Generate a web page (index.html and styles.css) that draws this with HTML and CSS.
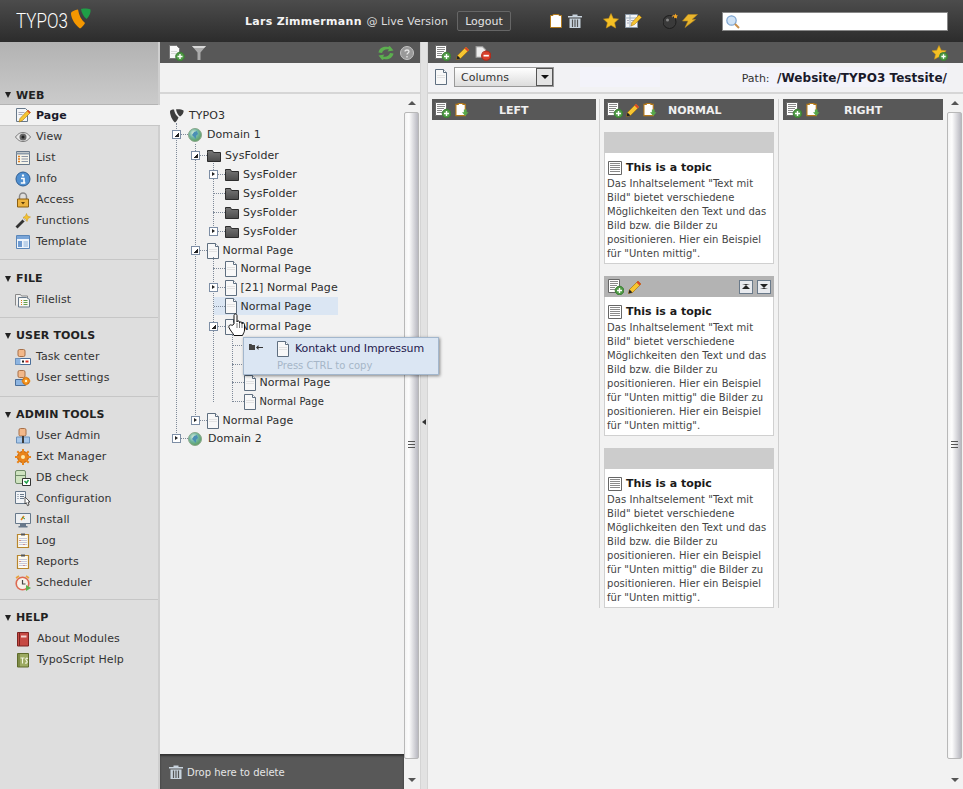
FILE: index.html
```html
<!DOCTYPE html>
<html lang="en">
<head>
    <meta charset="UTF-8">
    <meta name="viewport" content="width=device-width, initial-scale=1.0">
    <title>TYPO3 Backend</title>
    <link rel="stylesheet" href="styles.css">
</head>
<body>
    <!-- icon sprite -->
    <svg class="sprite" xmlns="http://www.w3.org/2000/svg">
        <defs>
            <linearGradient id="g-folder" x1="0" y1="0" x2="0" y2="1"><stop offset="0" stop-color="#777"/><stop offset="1" stop-color="#4c4c4c"/></linearGradient>
            <radialGradient id="g-globe" cx=".4" cy=".35" r=".7"><stop offset="0" stop-color="#dff0e0"/><stop offset=".5" stop-color="#6fb6a0"/><stop offset="1" stop-color="#5d9a58"/></radialGradient>
        </defs>
        <symbol id="i-page" viewBox="0 0 12 16"><path d="M.5.5h8l3 3v12H.5z" fill="#f8f8f8" stroke="#5f6f80"/><path d="M8.5.5v3h3" fill="#fff" stroke="#5f6f80"/><path d="M2.5 6.5h7M2.5 8.5h7" stroke="#ccc" stroke-dasharray="1 1"/></symbol>
        <symbol id="i-folder" viewBox="0 0 14 14"><path d="M.5 3.5v-2h5l1 2h7v9H.5z" fill="url(#g-folder)" stroke="#2c2c2c"/></symbol>
        <symbol id="i-globe" viewBox="0 0 14 14"><circle cx="7" cy="7" r="6.5" fill="url(#g-globe)" stroke="#8aa88a"/><path d="M6 4l3-1 1 3-2 2v3L6 9 4 7z" fill="#4a8fb5"/></symbol>
        <symbol id="i-t3" viewBox="0 0 14 14"><path d="M0 2.5C0 1 2 .5 4 .5c.5 3 2 6 4.5 8C7.500 11 6 13 5 13.500 2 11 0 6 0 2.500zM6 .5C8 0 12 .5 13.500 1.500c.5 1.500-1 5-3.500 6C8 6 6.500 3 6 .5z" fill="#3e3e3e"/></symbol>
        <symbol id="i-logo" viewBox="0 0 20 21"><path d="M0 5.500C0 3.500 4 2 7 1.500c1 6 3.500 10.500 7 13.500-1 2-3.500 5-5 5.500C4 17 0 10 0 5.500z" fill="#f49700"/><path d="M10 1C12 0 18 .5 19.500 1.500c.5 2.500-1 7-4 9.500C12.500 8.500 10.500 4.500 10 1z" fill="#1f9f47"/></symbol>
        <symbol id="i-new" viewBox="0 0 16 16"><path d="M.5.5h11v13H.5z" fill="#fff" stroke="#666"/><path d="M2 2.500h8M2 4.500h8M2 6.500h7M2 8.500h5M2 10.500h5" stroke="#8a8a8a"/><circle cx="11.500" cy="11.500" r="4.300" fill="#4f9a45" stroke="#3b7d34"/><path d="M11.500 9v5M9 11.500h5" stroke="#fff" stroke-width="1.400"/></symbol>
        <symbol id="i-newpage" viewBox="0 0 16 16"><path d="M.5.5h7l3 3v10H.5z" fill="#f8f8f8" stroke="#777"/><path d="M2.500 6.500h6M2.500 8.500h6" stroke="#bbb" stroke-dasharray="1 1"/><circle cx="11" cy="11.500" r="4.300" fill="#4f9a45" stroke="#3b7d34"/><path d="M11 9v5M8.500 11.500h5" stroke="#fff" stroke-width="1.400"/></symbol>
        <symbol id="i-filter" viewBox="0 0 14 14"><path d="M0 0h14L8.500 6.500V14h-3V6.500z" fill="#aaa"/><path d="M0 0h14l-2 2H2z" fill="#d8d8d8"/></symbol>
        <symbol id="i-refresh" viewBox="0 0 16 14"><path d="M.5 6.500C1.500 1.500 6 .2 10 1L11.800 0 15.500 4.500 9.500 5.500l1.500-2C8 2.800 5 3.800 4 7z" fill="#5cae4f"/><path d="M15.500 7.500c-1 5-5.500 6.300-9.500 5.500L4.200 14 .5 9.500 6.500 8.500 5 10.500c3 .7 6-.3 7-3.500z" fill="#5cae4f"/></symbol>
        <symbol id="i-help" viewBox="0 0 14 14"><circle cx="7" cy="7" r="6.500" fill="#999" stroke="#c4c4c4"/><path d="M5 5.500C5 3.500 9 3.500 9 5.500 9 7 7 7 7 8.500M7 10v1.500" fill="none" stroke="#e8e8e8" stroke-width="1.300"/></symbol>
        <symbol id="i-pencil" viewBox="0 0 14 14"><path d="M10 1l3 3-8.500 8.500-4 1 1-4z" fill="#f7c531" stroke="#a87512" stroke-width=".7"/><path d="M10 1l3 3-1.500 1.500-3-3z" fill="#d8452c"/><path d="M.5 13.500l1-4 3 3z" fill="#222"/></symbol>
        <symbol id="i-paste" viewBox="0 0 14 15"><path d="M.5 1.500H3v-1h5v1h2.500v12H.5z" fill="#fff" stroke="#b5791a" stroke-width="1.200"/><path d="M9 7h3v3h2l-3.500 4L7 10h2z" fill="#58a84a"/></symbol>
        <symbol id="i-clip" viewBox="0 0 12 14"><path d="M.5 1.500H3v-1h6v1h2.500v12H.5z" fill="#fff" stroke="#b07a1e"/></symbol>
        <symbol id="i-delpage" viewBox="0 0 15 14"><path d="M1 1h6l3 3v7H1z" fill="#eee" stroke="#999"/><circle cx="10.500" cy="9.500" r="4.300" fill="#d9402c" stroke="#b02a1a"/><path d="M8 9.500h5" stroke="#fff" stroke-width="1.600"/></symbol>
        <symbol id="i-star" viewBox="0 0 16 16"><path d="M8 .5l2.300 5 5.200.6-3.900 3.600 1.100 5.300L8 12.300 3.300 15l1.100-5.300L.5 6.100l5.200-.6z" fill="#f5c024" stroke="#c8921a" stroke-width=".6"/></symbol>
        <symbol id="i-staradd" viewBox="0 0 16 16"><path d="M7 .5l2.200 4.700 5 .6-3.700 3.400 1 5L7 11.700 2.500 14.200l1-5L-.2 5.800l5-.6z" fill="#f5c024" stroke="#c8921a" stroke-width=".6"/><circle cx="11.500" cy="11.500" r="4" fill="#4f9a45" stroke="#3b7d34"/><path d="M11.500 9.300v4.400M9.300 11.500h4.400" stroke="#fff" stroke-width="1.300"/></symbol>
        <symbol id="i-trash" viewBox="0 0 14 14"><path d="M0 2h14v1.500H0zM4.500.5h5V2h-5z" fill="#c9d4de"/><path d="M1.500 4.500h11V14h-11z" fill="#c9d4de"/><path d="M4.500 5.500V13M7 5.500V13M9.500 5.500V13" stroke="#555" stroke-width="1.200"/></symbol>
        <symbol id="i-edit" viewBox="0 0 17 16"><path d="M.5 1.500h12v13H.5z" fill="#f4f6f8" stroke="#8b99a8"/><path d="M5 1.500v13M.5 5h12" stroke="#9fb0c0"/><path d="M2 7.500h2M2 10h2M6 7.500h4M6 10h3" stroke="#aab"/><path d="M14 2l2.500 2.500-7 7L6 13l1-3.500z" fill="#f7c531" stroke="#a87512" stroke-width=".6"/></symbol>
        <symbol id="i-bomb" viewBox="0 0 16 16"><circle cx="6.500" cy="9" r="6.500" fill="#3a3a3a" stroke="#1e1e1e"/><circle cx="4.500" cy="7" r="1.500" fill="#888"/><path d="M9 4l2-2" stroke="#a87b3a" stroke-width="1.500"/><path d="M12.500.5l.8 1.700 1.700.3-1.200 1.300.3 1.700-1.600-.8-1.500.8.2-1.700-1.200-1.300 1.700-.3z" fill="#f5a623"/></symbol>
        <symbol id="i-bolt" viewBox="0 0 16 14"><path d="M6 .5h9.500L10 5.500h3.500L3 13.500 6 7H.5z" fill="#e9b52c" stroke="#b98a1c" stroke-width=".6"/></symbol>
        <symbol id="i-search" viewBox="0 0 14 14"><circle cx="5.500" cy="5.500" r="4.700" fill="#cfe2f5" stroke="#7ea5d0" stroke-width="1.200"/><path d="M9 9l4 4" stroke="#c98f4a" stroke-width="2"/></symbol>
        <symbol id="i-mod-page" viewBox="0 0 16 16"><path d="M1.500 1.500h9l2 2v11h-11z" fill="#f4f6f8" stroke="#67788a"/><path d="M3.500 5.500h6M3.500 7.500h4" stroke="#aab"/><path d="M13 3l2.500 2.500-8 8L4 15l1-3.500z" fill="#f7c531" stroke="#a87512" stroke-width=".6"/><path d="M13 3l2.500 2.500-1 1L12 4z" fill="#d8452c"/></symbol>
        <symbol id="i-eye" viewBox="0 0 16 16"><path d="M.5 8C3 4.500 5.500 3.500 8 3.500s5 1 7.500 4.500C13 11.500 10.500 12.500 8 12.500S3 11.500.5 8z" fill="#e8e8e8" stroke="#777"/><circle cx="8" cy="8" r="3.500" fill="#666"/><circle cx="8" cy="8" r="1.500" fill="#222"/></symbol>
        <symbol id="i-list" viewBox="0 0 16 16"><path d="M1.500 1.500h13v13h-13z" fill="#f6f4ea" stroke="#67788a"/><path d="M1.500 3.500h13" stroke="#8a9aaa" stroke-width="2"/><path d="M3 6.500h2M3 9h2M3 11.500h2" stroke="#e07b1a" stroke-width="1.500"/><path d="M6.500 6.500H13M6.500 9H13M6.500 11.500H13" stroke="#8a96a8"/></symbol>
        <symbol id="i-info" viewBox="0 0 16 16"><circle cx="8" cy="8" r="7" fill="#4f8fd0" stroke="#2f5f95"/><path d="M8 3.500v2" stroke="#fff" stroke-width="2.200"/><path d="M6 7.500h3v4h1.300M5.800 12h4.500" fill="none" stroke="#fff" stroke-width="1.600"/></symbol>
        <symbol id="i-lock" viewBox="0 0 16 16"><path d="M4.500 7V4.500a3.500 3.500 0 0 1 7 0V7" fill="none" stroke="#888" stroke-width="1.500"/><path d="M2.500 7h11v8h-11z" fill="#eeb43f" stroke="#8a5f12"/><path d="M6 10h4l-2 2.500z" fill="#5a3c0a"/></symbol>
        <symbol id="i-wand" viewBox="0 0 16 16"><path d="M.5 13.500l8-8 2 2-8 8z" fill="#333"/><path d="M8.500 5.500l2 2-1 1-2-2z" fill="#ddd"/><path d="M11.500.5l1 2.500 3 1-2.500 1.500-1 3-1.300-2.800L8 4.500 10.500 3z" fill="#f2c230" stroke="#c8921a" stroke-width=".5"/></symbol>
        <symbol id="i-template" viewBox="0 0 16 16"><path d="M1.500 1.500h13v13h-13z" fill="#eef4fb" stroke="#5a86b8"/><path d="M2 2h12v3H2z" fill="#7aa5d8"/><path d="M3 7h4v6H3z" fill="#6e9ad0"/><path d="M8.500 7H13v6H8.500z" fill="#bcd2ea"/></symbol>
        <symbol id="i-filelist" viewBox="0 0 16 16"><path d="M.5 13.500v-11h5L6.500 4h6v2" fill="#eee" stroke="#888"/><path d="M3.500 5.500h8l3 2V15h-11z" fill="#f8f8f4" stroke="#67788a"/><path d="M6 8.500h1M6 10.500h1M6 12.500h1" stroke="#d97a20"/><path d="M8.500 8.500h4M8.500 10.500h4M8.500 12.500h4" stroke="#67a050"/></symbol>
        <symbol id="i-task" viewBox="0 0 16 16"><rect x="3" y=".5" width="7" height="7" rx="1.500" fill="#f2b88a" stroke="#a87048"/><path d="M.5 9.500h15v6H.5z" fill="#fff" stroke="#4a6e9a"/><path d="M.5 9.500h5v6h-5z" fill="#8db4e0"/><path d="M7 11.500h2v2H7z" fill="#222"/><path d="M10.500 11.500h3v2h-3z" fill="#d93025"/></symbol>
        <symbol id="i-usercfg" viewBox="0 0 16 16"><rect x="3" y=".5" width="7" height="7" rx="1.500" fill="#f2b88a" stroke="#a87048"/><path d="M.5 9.500h10v6H.5z" fill="#8db4e0" stroke="#4a6e9a"/><circle cx="11" cy="11" r="3.500" fill="#f5941e" stroke="#c96a0a"/><path d="M11 6.500v9M6.500 11h9" stroke="#f5941e"/><circle cx="11" cy="11" r="1.200" fill="#fff3d0"/></symbol>
        <symbol id="i-user" viewBox="0 0 16 16"><rect x="4" y=".5" width="7" height="7.500" rx="1.500" fill="#f2b88a" stroke="#a87048"/><path d="M1.500 9h13v6h-13z" fill="#a8c8ea" stroke="#6a90ba"/><path d="M7 8h2v7H7z" fill="#3c3c3c"/></symbol>
        <symbol id="i-gear" viewBox="0 0 16 16"><circle cx="8" cy="8" r="5.500" fill="#e9841a" stroke="#b85e08"/><path d="M8 0v16M0 8h16M2.300 2.300l11.400 11.400M13.700 2.300L2.300 13.700" stroke="#e9841a" stroke-width="2"/><circle cx="8" cy="8" r="2" fill="#ffe9a8"/></symbol>
        <symbol id="i-db" viewBox="0 0 16 16"><rect x=".5" y=".5" width="10" height="13" rx="1.500" fill="#cfe3c0" stroke="#6f8a68"/><path d="M.5 5.500h10" stroke="#6f8a68"/><path d="M7.500 8.500h8v7h-8z" fill="#fff" stroke="#333"/><path d="M9.500 11l2 2 2-3" fill="none" stroke="#1f9f47" stroke-width="1.500"/></symbol>
        <symbol id="i-config" viewBox="0 0 16 16"><path d="M.5.500h10v12H.5z" fill="#f2f4f7" stroke="#67788a"/><path d="M2.500 3.500h1M2.500 5.500h1M2.500 7.500h1M5 3.500h4M5 5.500h4M5 7.500h4" stroke="#67788a"/><path d="M10 6l5 5h-2l1 3-1.500.7-1.200-3L10 13z" fill="#fff" stroke="#333" stroke-width=".8"/></symbol>
        <symbol id="i-install" viewBox="0 0 16 16"><path d="M.5 1.500h15v10H.5z" fill="#eef0f2" stroke="#67788a"/><path d="M5 12h6v2H5zM3.500 14h9v1.500h-9z" fill="#67788a"/><path d="M6 8l3-4" stroke="#e9841a" stroke-width="1.500"/><path d="M7 5l3 2" stroke="#3c9a48"/></symbol>
        <symbol id="i-log" viewBox="0 0 16 16"><path d="M2.500 1.500h11v13h-11z" fill="#fdfaf0" stroke="#b8862d" stroke-width="1.200"/><path d="M6 .5h4v2H6z" fill="#555"/><path d="M4.500 5.500h7M4.500 7.500h7M4.500 9.500h7M4.500 11.500h7" stroke="#8a96c8" stroke-dasharray="1 1"/><path d="M4.500 7.500h2M8.500 11.500h2" stroke="#d9503a" stroke-dasharray="1 1"/></symbol>
        <symbol id="i-clock" viewBox="0 0 16 16"><circle cx="7.500" cy="8.500" r="6.300" fill="#f6f2ea" stroke="#dd6a52" stroke-width="1.600"/><path d="M7.500 5v4h3" fill="none" stroke="#444" stroke-width="1.200"/><path d="M1 3l3-2M14 3l-3-2" stroke="#e9a23a" stroke-width="1.600"/><path d="M11 10l5 3-5 3z" fill="#5fb04c"/></symbol>
        <symbol id="i-book" viewBox="0 0 16 16"><path d="M2.500 1.500h11V15h-11z" fill="#c64a44" stroke="#7d2320"/><path d="M4.500 1.500V15" stroke="#7d2320"/><path d="M6 4.500h5.500v2H6z" fill="#f4d4d0"/></symbol>
        <symbol id="i-ts" viewBox="0 0 16 16"><path d="M2.500 1.500h11V15h-11z" fill="#9dab62" stroke="#5e6b2a"/><path d="M4 1.500V15" stroke="#5e6b2a"/><path d="M5.500 6h4M7.500 6v5.500M13 6.500c-2-1-3 .5-1.500 2s.5 3-1.500 2.500" fill="none" stroke="#f4f6e0" stroke-width="1.100"/></symbol>
        <symbol id="i-lines" viewBox="0 0 14 14"><path d="M.5.500h13v13H.5z" fill="#fff" stroke="#666"/><path d="M2 2.500h10M2 4.500h10M2 6.500h10M2 8.500h10M2 10.500h10" stroke="#8a8a8a"/></symbol>
        <symbol id="i-dropin" viewBox="0 0 14 8"><path d="M0 2.500V1h2.500L3 2h3v5H0z" fill="#444"/><path d="M14 4H9.500V2L7 4.500 9.500 7V5H14z" fill="#333"/></symbol>
    </svg>

    <header class="topbar">
        <div class="brand">
            <span class="brand-name">TYPO3</span>
            <svg class="logo-mark"><use href="#i-logo"/></svg>
        </div>
        <div class="user-info"><strong>Lars Zimmermann</strong> @ Live Version</div>
        <button class="logout">Logout</button>
        <div class="top-icons top-icons-a">
            <svg class="ico-clip"><use href="#i-clip"/></svg>
            <svg class="ico-14"><use href="#i-trash"/></svg>
        </div>
        <div class="top-icons top-icons-b">
            <svg class="ico-16"><use href="#i-star"/></svg>
            <svg class="ico-17"><use href="#i-edit"/></svg>
        </div>
        <div class="top-icons top-icons-c">
            <svg class="ico-16"><use href="#i-bomb"/></svg>
            <svg class="ico-16"><use href="#i-bolt"/></svg>
        </div>
        <div class="search-box"><svg class="ico-14"><use href="#i-search"/></svg></div>
    </header>

    <div class="main">
        <nav class="modules">
            <section class="mod-group mod-group-first">
                <h3 class="mod-head mod-head-first"><i class="caret"></i>WEB</h3>
                <ul>
                    <li class="mod-item active"><svg class="ico-16"><use href="#i-mod-page"/></svg>Page</li>
                    <li class="mod-item"><svg class="ico-16"><use href="#i-eye"/></svg>View</li>
                    <li class="mod-item"><svg class="ico-16"><use href="#i-list"/></svg>List</li>
                    <li class="mod-item"><svg class="ico-16"><use href="#i-info"/></svg>Info</li>
                    <li class="mod-item"><svg class="ico-16"><use href="#i-lock"/></svg>Access</li>
                    <li class="mod-item"><svg class="ico-16"><use href="#i-wand"/></svg>Functions</li>
                    <li class="mod-item"><svg class="ico-16"><use href="#i-template"/></svg>Template</li>
                </ul>
            </section>
            <section class="mod-group mod-group-file">
                <h3 class="mod-head"><i class="caret"></i>FILE</h3>
                <ul>
                    <li class="mod-item"><svg class="ico-16"><use href="#i-filelist"/></svg>Filelist</li>
                </ul>
            </section>
            <section class="mod-group">
                <h3 class="mod-head"><i class="caret"></i>USER TOOLS</h3>
                <ul>
                    <li class="mod-item"><svg class="ico-16"><use href="#i-task"/></svg>Task center</li>
                    <li class="mod-item"><svg class="ico-16"><use href="#i-usercfg"/></svg>User settings</li>
                </ul>
            </section>
            <section class="mod-group mod-group-admin">
                <h3 class="mod-head"><i class="caret"></i>ADMIN TOOLS</h3>
                <ul>
                    <li class="mod-item"><svg class="ico-16"><use href="#i-user"/></svg>User Admin</li>
                    <li class="mod-item"><svg class="ico-16"><use href="#i-gear"/></svg>Ext Manager</li>
                    <li class="mod-item"><svg class="ico-16"><use href="#i-db"/></svg>DB check</li>
                    <li class="mod-item"><svg class="ico-16"><use href="#i-config"/></svg>Configuration</li>
                    <li class="mod-item"><svg class="ico-16"><use href="#i-install"/></svg>Install</li>
                    <li class="mod-item"><svg class="ico-16"><use href="#i-log"/></svg>Log</li>
                    <li class="mod-item"><svg class="ico-16"><use href="#i-log"/></svg>Reports</li>
                    <li class="mod-item"><svg class="ico-16"><use href="#i-clock"/></svg>Scheduler</li>
                </ul>
            </section>
            <section class="mod-group mod-group-last">
                <h3 class="mod-head"><i class="caret"></i>HELP</h3>
                <ul>
                    <li class="mod-item mod-item-help"><svg class="ico-16"><use href="#i-book"/></svg>About Modules</li>
                    <li class="mod-item mod-item-help"><svg class="ico-16"><use href="#i-ts"/></svg>TypoScript Help</li>
                </ul>
            </section>
        </nav>

        <div class="tree-panel">
            <div class="toolbar tree-toolbar">
                <svg class="ico-16"><use href="#i-newpage"/></svg>
                <svg class="ico-14"><use href="#i-filter"/></svg>
                <span class="spacer"></span>
                <svg class="ico-16"><use href="#i-refresh"/></svg>
                <svg class="ico-14"><use href="#i-help"/></svg>
            </div>
            <div class="filter-bar"></div>
            <div class="tree-body">
                <div class="tree-col">
                    <div class="tree">
                        <div class="row row-root"><svg class="ico-14"><use href="#i-t3"/></svg><span class="label label-root">TYPO3</span></div>
                        <ul class="branch branch-1">
                            <li>
                                <div class="row l1"><i class="exp open"></i><svg class="ico-14"><use href="#i-globe"/></svg><span class="label label-5">Domain 1</span></div>
                                <ul class="branch branch-2">
                                    <li class="gap-2">
                                        <div class="row l2"><i class="exp open"></i><svg class="ico-14"><use href="#i-folder"/></svg><span class="label">SysFolder</span></div>
                                        <ul class="branch branch-3">
                                            <li><div class="row l3"><i class="exp"></i><svg class="ico-14"><use href="#i-folder"/></svg><span class="label">SysFolder</span></div></li>
                                            <li><div class="row l3"><i class="conn"></i><svg class="ico-14"><use href="#i-folder"/></svg><span class="label">SysFolder</span></div></li>
                                            <li><div class="row l3"><i class="conn"></i><svg class="ico-14"><use href="#i-folder"/></svg><span class="label">SysFolder</span></div></li>
                                            <li><div class="row l3"><i class="exp"></i><svg class="ico-14"><use href="#i-folder"/></svg><span class="label">SysFolder</span></div></li>
                                        </ul>
                                    </li>
                                    <li>
                                        <div class="row l2"><i class="exp open"></i><svg class="ico-page"><use href="#i-page"/></svg><span class="label">Normal Page</span></div>
                                        <ul class="branch branch-3">
                                            <li class="gap-n1"><div class="row l3"><i class="conn"></i><svg class="ico-page"><use href="#i-page"/></svg><span class="label">Normal Page</span></div></li>
                                            <li><div class="row l3"><i class="exp"></i><svg class="ico-page"><use href="#i-page"/></svg><span class="label">[21] Normal Page</span></div></li>
                                            <li><div class="row l3 selected"><i class="conn"></i><svg class="ico-page"><use href="#i-page"/></svg><span class="label">Normal Page</span></div></li>
                                            <li class="gap-2">
                                                <div class="row l3"><i class="exp open"></i><svg class="ico-page"><use href="#i-page"/></svg><span class="label">Normal Page</span></div>
                                                <ul class="branch branch-4">
                                                    <!-- the labels of these two rows lie under the drag tooltip -->
                                                    <li><div class="row l4"><i class="conn"></i><svg class="ico-page"><use href="#i-page"/></svg></div></li>
                                                    <li><div class="row l4"><i class="conn"></i><svg class="ico-page"><use href="#i-page"/></svg></div></li>
                                                    <li class="gap-n1"><div class="row l4"><i class="conn"></i><svg class="ico-page"><use href="#i-page"/></svg><span class="label">Normal Page</span></div></li>
                                                    <li><div class="row l4"><i class="conn"></i><svg class="ico-page"><use href="#i-page"/></svg><span class="label label-small">Normal Page</span></div></li>
                                                </ul>
                                            </li>
                                        </ul>
                                    </li>
                                    <li><div class="row l2"><i class="exp"></i><svg class="ico-page"><use href="#i-page"/></svg><span class="label">Normal Page</span></div></li>
                                </ul>
                            </li>
                            <li class="gap-n1"><div class="row l1"><i class="exp"></i><svg class="ico-14"><use href="#i-globe"/></svg><span class="label label-6">Domain 2</span></div></li>
                        </ul>

                        <div class="drag-tip">
                            <svg class="ico-drop"><use href="#i-dropin"/></svg>
                            <div class="drag-tip-text">
                                <div class="drag-tip-title"><svg class="ico-page"><use href="#i-page"/></svg>Kontakt und Impressum</div>
                                <div class="drag-tip-hint">Press CTRL to copy</div>
                            </div>
                        </div>
                        <svg class="hand" viewBox="0 0 18 24"><path d="M6 11V2.500C6 .5 9 .5 9 2.500V9c0-1.500 2.500-1.500 2.500 0v1c0-1.500 2.500-1.500 2.500 0v1c0-1.300 2.500-1.300 2.500.3V17c0 2-1 3-2 5.500H6C5 20 2.500 18 1 14.500.3 12.500 2.500 11 4 12.500z" fill="#fff" stroke="#111"/><path d="M9 10v5M11.500 10v5M14 11v4" stroke="#555" stroke-width=".8"/></svg>
                    </div>
                    <div class="drop-delete"><svg class="ico-14"><use href="#i-trash"/></svg>Drop here to delete</div>
                </div>
                <div class="scrollbar">
                    <div class="scroll-btn"><i class="arrow-up"></i></div>
                    <div class="scroll-thumb"><i class="grip"></i></div>
                    <div class="scroll-track"></div>
                    <div class="scroll-btn"><i class="arrow-down"></i></div>
                </div>
            </div>
        </div>

        <div class="splitter"><i class="splitter-arrow"></i></div>

        <div class="content">
            <div class="toolbar content-toolbar">
                <svg class="ico-16"><use href="#i-new"/></svg>
                <svg class="ico-14"><use href="#i-pencil"/></svg>
                <svg class="ico-16"><use href="#i-delpage"/></svg>
                <span class="spacer"></span>
                <svg class="ico-16"><use href="#i-staradd"/></svg>
            </div>
            <div class="doc-bar">
                <svg class="ico-page"><use href="#i-page"/></svg>
                <div class="select-box"><span class="select-value">Columns</span><span class="select-btn"><i class="arrow-select"></i></span></div>
                <span class="doc-patch"></span>
                <div class="path">Path: <strong>/Website/TYPO3 Testsite/</strong></div>
            </div>
            <div class="content-body">
                <div class="columns">
                    <div class="col col-left">
                        <div class="col-head">
                            <svg class="ico-16"><use href="#i-new"/></svg>
                            <svg class="ico-14"><use href="#i-paste"/></svg>
                            <span class="col-title">LEFT</span>
                        </div>
                    </div>
                    <div class="col col-normal">
                        <div class="col-head">
                            <svg class="ico-16"><use href="#i-new"/></svg>
                            <svg class="ico-14"><use href="#i-pencil"/></svg>
                            <svg class="ico-14"><use href="#i-paste"/></svg>
                            <span class="col-title">NORMAL</span>
                        </div>
                        <article class="card">
                            <div class="card-head"></div>
                            <div class="card-body">
                                <h4 class="card-title"><svg class="ico-14"><use href="#i-lines"/></svg>This is a topic</h4>
                                <p>Das Inhaltselement "Text mit Bild" bietet verschiedene Möglichkeiten den Text und das Bild bzw. die Bilder zu positionieren. Hier ein Beispiel für "Unten mittig".</p>
                            </div>
                        </article>
                        <article class="card">
                            <div class="card-head card-head-hover">
                                <svg class="ico-16"><use href="#i-new"/></svg>
                                <svg class="ico-14"><use href="#i-pencil"/></svg>
                                <span class="spacer"></span>
                                <span class="move-btn"><i class="move-up"></i></span>
                                <span class="move-btn"><i class="move-down"></i></span>
                            </div>
                            <div class="card-body">
                                <h4 class="card-title"><svg class="ico-14"><use href="#i-lines"/></svg>This is a topic</h4>
                                <p>Das Inhaltselement "Text mit Bild" bietet verschiedene Möglichkeiten den Text und das Bild bzw. die Bilder zu positionieren. Hier ein Beispiel für "Unten mittig" die Bilder zu positionieren. Hier ein Beispiel für "Unten mittig".</p>
                            </div>
                        </article>
                        <article class="card">
                            <div class="card-head"></div>
                            <div class="card-body">
                                <h4 class="card-title"><svg class="ico-14"><use href="#i-lines"/></svg>This is a topic</h4>
                                <p>Das Inhaltselement "Text mit Bild" bietet verschiedene Möglichkeiten den Text und das Bild bzw. die Bilder zu positionieren. Hier ein Beispiel für "Unten mittig" die Bilder zu positionieren. Hier ein Beispiel für "Unten mittig".</p>
                            </div>
                        </article>
                    </div>
                    <div class="col col-right">
                        <div class="col-head">
                            <svg class="ico-16"><use href="#i-new"/></svg>
                            <svg class="ico-14"><use href="#i-paste"/></svg>
                            <span class="col-title">RIGHT</span>
                        </div>
                    </div>
                </div>
                <div class="scrollbar">
                    <div class="scroll-btn"><i class="arrow-up"></i></div>
                    <div class="scroll-thumb"><i class="grip"></i></div>
                    <div class="scroll-track"></div>
                    <div class="scroll-btn"><i class="arrow-down"></i></div>
                </div>
            </div>
        </div>
    </div>
</body>
</html>
```

FILE: styles.css
```css
* {
    margin: 0;
    padding: 0;
    box-sizing: border-box;
}

html, body {
    height: 100%;
    overflow: hidden;
}

body {
    font-family: "DejaVu Sans", Verdana, sans-serif;
    font-size: 11px;
    color: #333;
    background-color: #f2f2f2;
    display: flex;
    flex-direction: column;
}

ul {
    list-style: none;
}

i {
    display: block;
    flex: none;
}

svg {
    display: block;
    flex: none;
}

.sprite {
    position: absolute;
    width: 0;
    height: 0;
}

.ico-16 { width: 16px; height: 16px; }
.ico-17 { width: 17px; height: 16px; }
.ico-14 { width: 14px; height: 14px; }
.ico-page { width: 12px; height: 16px; }
.ico-clip { width: 12px; height: 14px; }
.ico-drop { width: 14px; height: 8px; }

.spacer {
    flex: 1;
}

/* top bar */
.topbar {
    height: 42px;
    flex: none;
    display: flex;
    align-items: center;
    color: #e8e8e8;
    background: linear-gradient(#4c4c4c, #2c2c2c);
}

.brand {
    width: 245px;
    height: 42px;
    padding-left: 16px;
    display: flex;
    align-items: flex-start;
}

.brand-name {
    font-family: "Roboto", sans-serif;
    font-weight: 300;
    font-size: 21px;
    line-height: 42px;
    width: 55px;
    color: #fff;
    transform: scaleX(0.81);
    transform-origin: left center;
}

.logo-mark {
    width: 20px;
    height: 21px;
    margin-top: 8px;
}

.user-info {
    width: 212px;
    font-size: 11px;
    letter-spacing: 0.05px;
    white-space: nowrap;
    color: #ddd;
}

.user-info strong {
    letter-spacing: 0.3px;
    margin-right: 1px;
    color: #f4f4f4;
}

.logout {
    width: 54px;
    height: 20px;
    font: 11px "DejaVu Sans", Verdana, sans-serif;
    color: #e4e4e4;
    background-color: #3f3f3f;
    border: 1px solid #666;
    border-radius: 2px;
}

.top-icons {
    display: flex;
    align-items: center;
}

.top-icons-a { margin-left: 39px; gap: 6px; }
.top-icons-b { margin-left: 21px; gap: 6px; }
.top-icons-c { margin-left: 21px; gap: 3px; }

.search-box {
    width: 226px;
    height: 19px;
    margin-left: 24px;
    padding: 2px 3px;
    background-color: #fff;
    border: 1px solid #888;
}

.main {
    flex: 1;
    display: flex;
    min-height: 0;
}

/* module menu */
.modules {
    width: 160px;
    flex: none;
    background-color: #dedede;
    border-right: 2px solid #cfcfcf;
}

.mod-group {
    padding: 7px 0 8px;
    border-bottom: 1px solid #c6c6c6;
}

.mod-group-first {
    padding-top: 0;
    padding-bottom: 7px;
}

.mod-group-file {
    padding: 8px 0 7px;
}

.mod-group-admin {
    padding-bottom: 6px;
}

.mod-group-last {
    padding-top: 7px;
    border-bottom: 0;
}

.mod-head {
    height: 21px;
    padding-left: 5px;
    display: flex;
    align-items: center;
    gap: 5px;
    font-size: 11px;
    letter-spacing: 0.15px;
    color: #222;
}

.mod-head-first {
    height: 63px;
    padding-top: 44px;
    background: linear-gradient(#b2b2b2, #cbcbcb);
    border-bottom: 1px solid #b4b4b4;
}

.caret {
    width: 0;
    height: 0;
    border-left: 3.5px solid transparent;
    border-right: 3.5px solid transparent;
    border-top: 6px solid #222;
}

.mod-item {
    height: 21px;
    padding-left: 15px;
    display: flex;
    align-items: center;
    gap: 5px;
    letter-spacing: 0.08px;
    white-space: nowrap;
}

.mod-item.active {
    width: 160px;
    font-weight: bold;
    color: #1a1a2a;
    background-color: #f2f2f2;
    border-bottom: 1px solid #c6c6c6;
}

.mod-item-help {
    gap: 6px;
}

/* tree panel */
.tree-panel {
    width: 260px;
    flex: none;
    display: flex;
    flex-direction: column;
}

.toolbar {
    height: 21px;
    flex: none;
    display: flex;
    align-items: center;
    background-color: #585858;
}

.tree-toolbar {
    padding: 0 6px 0 9px;
    gap: 6px;
}

.tree-toolbar .ico-14:nth-of-type(2) {
    margin-left: 1px;
}

.filter-bar {
    height: 31px;
    flex: none;
    background-color: #f2f2f2;
    border-bottom: 2px solid #d6d6d6;
}

.tree-body {
    flex: 1;
    display: flex;
    min-height: 0;
}

.tree-col {
    flex: 1;
    display: flex;
    flex-direction: column;
    min-width: 0;
}

.tree {
    flex: 1;
    padding-top: 12px;
    position: relative;
}

.row {
    height: 19px;
    display: flex;
    align-items: center;
    white-space: nowrap;
    color: #2e2e2e;
}

.row-root { padding-left: 10px; }
.l1 { padding-left: 12px; }
.l2 { padding-left: 31px; }
.l3 { padding-left: 49px; }
.l4 { padding-left: 68px; }

.row.selected {
    width: 124px;
    height: 18px;
    margin-left: 54px;
    padding-left: 0;
    background-color: #dbe6f3;
}

.row.selected .conn {
    margin-left: 0;
    width: 11px;
}

.label {
    margin-left: 4px;
    letter-spacing: 0.08px;
}

.ico-page + .label {
    margin-left: 3.5px;
}

.label-root { margin-left: 5px; }
.label-5 { margin-left: 5px; }
.label-6 { margin-left: 6px; }
.label-small { font-size: 10px; }

.gap-2 { margin-top: 2px; }
.gap-n1 { margin-top: -1px; }

.branch {
    position: relative;
}

/* vertical dotted guide of a tree level, stops at the last sibling */
.branch::before {
    content: "";
    position: absolute;
    top: -2px;
    bottom: 9px;
    border-left: 1px dotted #7f8a99;
}

.branch-1::before { left: 16px; }
.branch-2::before { left: 35px; }
.branch-3::before { left: 53px; }
.branch-4::before { left: 72px; }

.exp {
    width: 9px;
    height: 9px;
    margin-right: 7px;
    background-color: #fff;
    border: 1px solid #7d8ea5;
    position: relative;
}

.exp::before {
    content: "";
    position: absolute;
    left: 2px;
    top: 1px;
    border-left: 3px solid #222;
    border-top: 2.5px solid transparent;
    border-bottom: 2.5px solid transparent;
}

.exp.open::before {
    left: 2px;
    top: 2px;
    width: 4px;
    height: 4px;
    border: 0;
    background: linear-gradient(135deg, transparent 50%, #222 50%);
}

.exp::after {
    content: "";
    position: absolute;
    left: 8px;
    top: 3px;
    width: 7px;
    border-top: 1px dotted #7f8a99;
}

.conn {
    width: 12px;
    height: 1px;
    margin-left: 4px;
    border-top: 1px dotted #7f8a99;
}

/* drag tooltip */
.drag-tip {
    position: absolute;
    left: 83px;
    top: 243px;
    z-index: 5;
    width: 196px;
    height: 38px;
    display: flex;
    background-color: #dbe6f3;
    border: 1px solid #a3b7cd;
    box-shadow: 1px 1px 3px rgba(0, 0, 0, 0.45);
}

.ico-drop {
    margin: 5px 0 0 5px;
}

.drag-tip-text {
    margin-left: 14px;
}

.drag-tip-title {
    height: 19px;
    margin-top: 1px;
    display: flex;
    align-items: center;
    gap: 6px;
    letter-spacing: -0.1px;
    color: #26204e;
    white-space: nowrap;
}

.drag-tip-hint {
    margin-top: 2px;
    font-size: 10px;
    color: #a6b6c8;
}

.hand {
    position: absolute;
    left: 68px;
    top: 219px;
    z-index: 6;
    width: 18px;
    height: 24px;
}

.drop-delete {
    height: 35px;
    flex: none;
    padding: 1px 0 0 9px;
    display: flex;
    align-items: center;
    gap: 4px;
    font-size: 10px;
    color: #e6e6e6;
    background-color: #585858;
    box-shadow: inset 0 2px 2px #333;
}

/* scrollbars */
.scrollbar {
    width: 16px;
    flex: none;
    display: flex;
    flex-direction: column;
    background-color: #f2f2f2;
}

.scroll-btn {
    height: 18px;
    flex: none;
    display: flex;
    align-items: center;
    justify-content: center;
}

.arrow-up {
    border-left: 4px solid transparent;
    border-right: 4px solid transparent;
    border-bottom: 4px solid #555;
}

.arrow-down {
    border-left: 4px solid transparent;
    border-right: 4px solid transparent;
    border-top: 4px solid #555;
}

.scroll-thumb {
    height: 647px;
    flex: none;
    margin-right: 1px;
    padding-top: 18px;
    display: flex;
    align-items: center;
    justify-content: center;
    background: linear-gradient(90deg, #f4f4f4, #fdfdfd 30%, #b8b8c0);
    border: 1px solid #b8b8b8;
    border-radius: 2px;
}

.scroll-track {
    flex: 1;
}

.grip {
    width: 7px;
    height: 7px;
    background: repeating-linear-gradient(#555 0, #555 1px, transparent 1px, transparent 3px);
}

.splitter {
    width: 8px;
    flex: none;
    display: flex;
    align-items: center;
    justify-content: center;
    background-color: #e2e2e2;
    border-left: 1px solid #d4d4d4;
    border-right: 1px solid #d4d4d4;
}

.splitter-arrow {
    margin-top: 13px;
    border-top: 3px solid transparent;
    border-bottom: 3px solid transparent;
    border-right: 4px solid #333;
}

/* page module */
.content {
    flex: 1;
    min-width: 0;
    display: flex;
    flex-direction: column;
}

.content-toolbar {
    padding: 0 15px 0 7px;
    gap: 5px;
}

.doc-bar {
    height: 31px;
    flex: none;
    display: flex;
    align-items: center;
    padding: 0 16px 1px 7px;
    background-color: #f2f2f4;
    border-bottom: 2px solid #d6d6d6;
}

.select-box {
    width: 100px;
    height: 20px;
    margin-left: 7px;
    padding-left: 6px;
    display: flex;
    align-items: center;
    justify-content: space-between;
    background: linear-gradient(#fff, #dcdcdc);
    border: 1px solid #999;
}

.select-btn {
    width: 17px;
    height: 18px;
    display: flex;
    align-items: center;
    justify-content: center;
    background-color: #e4e4e4;
    border: 1px solid #555;
}

.arrow-select {
    border-left: 4px solid transparent;
    border-right: 4px solid transparent;
    border-top: 4px solid #111;
}

.doc-patch {
    width: 80px;
    height: 20px;
    margin-left: 26px;
    background-color: #f3f3fa;
}

.path {
    margin-left: auto;
    padding: 4px 0 2px 2px;
    white-space: nowrap;
    background-color: #f3f3fa;
}

.path strong {
    margin-left: 4px;
    font-size: 12px;
    letter-spacing: 0.04px;
    color: #1a1a2a;
}

.content-body {
    flex: 1;
    display: flex;
    min-height: 0;
}

.columns {
    flex: 1;
    min-width: 0;
    display: flex;
    align-items: flex-start;
    padding: 5px 0 0 4px;
}

.col {
    min-height: 509px;
}

.col-left {
    width: 168px;
    padding-right: 3px;
    border-right: 1px solid #d0d0d0;
}

.col-normal {
    width: 179px;
    padding: 0 4px;
    border-right: 1px solid #d0d0d0;
}

.col-right {
    width: 164px;
    padding-left: 4px;
}

.col-head {
    height: 21px;
    padding-left: 3px;
    display: flex;
    align-items: center;
    gap: 4px;
    background-color: #585858;
}

.col-normal .col-head {
    gap: 3px;
}

.col-title {
    padding-top: 1px;
    font-weight: bold;
    color: #f0f0f0;
}

.col-left .col-title { margin-left: 26px; }
.col-normal .col-title { margin-left: 8px; }
.col-right .col-title { margin-left: 20px; }

.card {
    margin-top: 12px;
    border: 1px solid #d0d0d0;
    border-top: 0;
    background-color: #fff;
}

.card-head {
    height: 21px;
    margin: 0 -1px;
    padding: 0 3px 0 4px;
    display: flex;
    align-items: center;
    gap: 4px;
    background-color: #cccccc;
}

.card-head-hover {
    background-color: #b3b3b3;
}

.move-btn {
    width: 14px;
    height: 14px;
    display: flex;
    align-items: center;
    justify-content: center;
    background-color: #e8eaee;
    border: 1px solid #6a7a8a;
}

.move-up {
    height: 0;
    border-left: 4px solid transparent;
    border-right: 4px solid transparent;
    border-bottom: 4px solid #222;
    border-top: 1px solid #222;
}

.move-down {
    height: 0;
    border-left: 4px solid transparent;
    border-right: 4px solid transparent;
    border-top: 4px solid #222;
    border-bottom: 1px solid #222;
}

.card-body {
    padding: 7px 2px 2px 2px;
    color: #444;
    font-size: 10px;
    letter-spacing: 0.05px;
    line-height: 14px;
}

.card-title {
    height: 16px;
    margin: 0 0 1px 1px;
    display: flex;
    align-items: center;
    gap: 4px;
    font-size: 11px;
    letter-spacing: 0;
    color: #1a1a1a;
}
```
